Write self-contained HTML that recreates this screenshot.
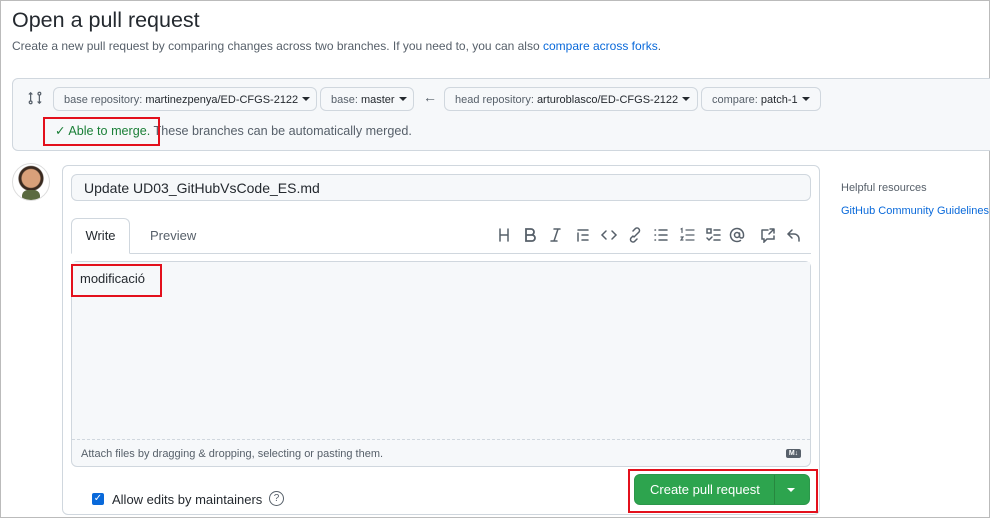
<!DOCTYPE html><html><head><meta charset="utf-8"><style>
body{margin:0;width:990px;height:518px;overflow:hidden;background:#fff;font-family:"Liberation Sans",sans-serif;color:#24292f;position:relative}
.a{position:absolute}
.btn{position:absolute;top:87px;height:24px;border:1px solid #d0d7de;border-radius:6px;background:#f6f8fa;font-size:11px;line-height:24px;padding:0 10px;box-sizing:border-box;color:#57606a;white-space:nowrap}
.btn b{color:#24292f;font-weight:normal}
.car{display:inline-block;border:4px solid transparent;border-top-color:#24292f;border-bottom:0;margin-left:4px;vertical-align:2px}
.ic{position:absolute;top:227px}
.red{position:absolute;border:2px solid #e3101c}
</style></head><body>
<div class="a" style="left:0;top:0;width:988px;height:516px;border:1px solid #bbb"></div>
<div class="a" style="left:12px;top:8px;font-size:21.5px">Open a pull request</div>
<div class="a" style="left:12px;top:39px;font-size:12px;color:#57606a">Create a new pull request by comparing changes across two branches. If you need to, you can also <span style="color:#0969da">compare across forks</span>.</div>
<div class="a" style="left:12px;top:78px;width:990px;height:71px;background:#f6f8fa;border:1px solid #d0d7de;border-radius:6px"></div>
<svg class="a" style="left:28px;top:91px" width="14" height="14" viewBox="0 0 16 16" fill="none" stroke="#57606a" stroke-width="1.4"><circle cx="3" cy="13" r="1.6"/><circle cx="13" cy="3" r="1.6"/><path d="M3 11V2M1 4l2-2 2 2M13 5v9M11 12l2 2 2-2"/></svg>
<div class="btn" style="left:53px;width:264px">base repository: <b>martinezpenya/ED-CFGS-2122</b><span class="car"></span></div>
<div class="btn" style="left:320px;width:94px">base: <b>master</b><span class="car"></span></div>
<div class="a" style="left:423px;top:89px;font-size:14px;color:#57606a">←</div>
<div class="btn" style="left:444px;width:254px">head repository: <b>arturoblasco/ED-CFGS-2122</b><span class="car"></span></div>
<div class="btn" style="left:701px;width:120px">compare: <b>patch-1</b><span class="car"></span></div>
<div class="a" style="left:55px;top:123px;font-size:12.6px;color:#57606a"><span style="color:#1a7f37">✓ Able to merge.</span> These branches can be automatically merged.</div>
<div class="red" style="left:43px;top:117px;width:113px;height:25px"></div>
<div class="a" style="left:12px;top:163px;width:36px;height:36px;border-radius:50%;border:1px solid #ddd;background:radial-gradient(circle at 50% 40%,#d9a07a 0 9px,#3a2a20 10px 12px,#fff 13px);overflow:hidden"><div class="a" style="left:9px;top:26px;width:18px;height:12px;background:#5a6a40;border-radius:6px 6px 0 0"></div></div>
<div class="a" style="left:62px;top:165px;width:756px;height:348px;border:1px solid #d0d7de;border-radius:6px"></div>
<div class="a" style="left:71px;top:174px;height:27px;border:1px solid #d0d7de;border-radius:6px;background:#f6f8fa;font-size:14px;line-height:27px;padding-left:12px;box-sizing:border-box;width:740px">Update UD03_GitHubVsCode_ES.md</div>
<div class="a" style="left:71px;top:253px;width:740px;height:1px;background:#d0d7de"></div>
<div class="a" style="left:71px;top:218px;width:59px;height:36px;border:1px solid #d0d7de;border-bottom-color:#fff;border-radius:6px 6px 0 0;background:#fff;font-size:13px;line-height:34px;text-align:center;box-sizing:border-box">Write</div>
<div class="a" style="left:150px;top:228px;font-size:13px;color:#57606a">Preview</div>
<svg class="ic" style="left:496px" width="310" height="16" viewBox="0 0 310 16" fill="none" stroke="#57606a" stroke-width="1.5" stroke-linecap="round">
<path d="M4 2v12M12 2v12M4 8h8"/>
<path d="M30 2h5a3 3 0 0 1 0 6h-5zM30 8h6a3 3 0 0 1 0 6h-6z" stroke-width="1.8"/>
<path d="M58 2h6M55 14h6M62 2l-4 12"/>
<path d="M82 3h10M86 8h6M86 13h6M82 6v8"/>
<path d="M110 4l-4 4 4 4M116 4l4 4-4 4"/>
<path d="M137 9l-2 2a2.5 2.5 0 0 0 3.5 3.5l2.5-2.5M141 7l2-2a2.5 2.5 0 0 0-3.5-3.5L137 4M138 10l4-4"/>
<path d="M163 3h8M163 8h8M163 13h8M159 3h.5M159 8h.5M159 13h.5"/>
<path d="M190 3h8M190 8h8M190 13h8M185 2l1-.5v4M185 10h2l-2 3h2" stroke-width="1.2"/>
<path d="M211 2h4v4h-4zM218 3h6M218 8h6M218 13h6M211 11l2 2 3-3"/>
<circle cx="241" cy="8" r="2.5"/><path d="M243.5 6v3a2 2 0 0 0 4 0V8a6.5 6.5 0 1 0-3 5.5"/>
<path d="M266 3h6M278 2v4M278 2h-4M278 2l-5 5M278 9v3h-7l-3 3v-3h-2V3"/>
<path d="M296 3l-4 4 4 4M292 7h6a5 5 0 0 1 5 5v2"/>
</svg>
<div class="a" style="left:71px;top:261px;width:740px;height:206px;border:1px solid #d0d7de;border-radius:6px;background:#f6f8fa;box-sizing:border-box"></div>
<div class="a" style="left:72px;top:262px;width:738px;height:177px;background:#f6f8fa;border-bottom:1px dashed #d0d7de"></div>
<div class="a" style="left:80px;top:271px;font-size:13px">modificació</div>
<div class="red" style="left:71px;top:264px;width:87px;height:29px"></div>
<div class="a" style="left:81px;top:448px;font-size:11px;color:#57606a">Attach files by dragging &amp; dropping, selecting or pasting them.</div>
<div class="a" style="left:786px;top:449px;width:15px;height:9px;background:#57606a;border-radius:2px;color:#fff;font-size:7px;line-height:9px;text-align:center;font-weight:bold">M↓</div>
<div class="a" style="left:92px;top:493px;width:12px;height:12px;background:#0969da;border-radius:2px;color:#fff;font-size:10px;line-height:12px;text-align:center">✓</div>
<div class="a" style="left:112px;top:492px;font-size:13px">Allow edits by maintainers</div>
<div class="a" style="left:269px;top:491px;width:13px;height:13px;border:1px solid #57606a;border-radius:50%;font-size:10px;line-height:13px;text-align:center;color:#57606a">?</div>
<div class="a" style="left:634px;top:474px;width:176px;height:31px;background:#2da44e;border:1px solid #2c974b;border-radius:6px;box-sizing:border-box;color:#fff;font-size:13px;line-height:29px"><span style="margin-left:15px">Create pull request</span><div class="a" style="left:139px;top:0;width:1px;height:29px;background:#27873f"></div><span class="car" style="position:absolute;left:152px;top:13px;border-top-color:#fff;margin:0"></span></div>
<div class="red" style="left:628px;top:469px;width:186px;height:40px"></div>
<div class="a" style="left:841px;top:182px;font-size:11px;color:#57606a">Helpful resources</div>
<div class="a" style="left:841px;top:205px;font-size:11px;color:#0969da">GitHub Community Guidelines</div>
</body></html>
